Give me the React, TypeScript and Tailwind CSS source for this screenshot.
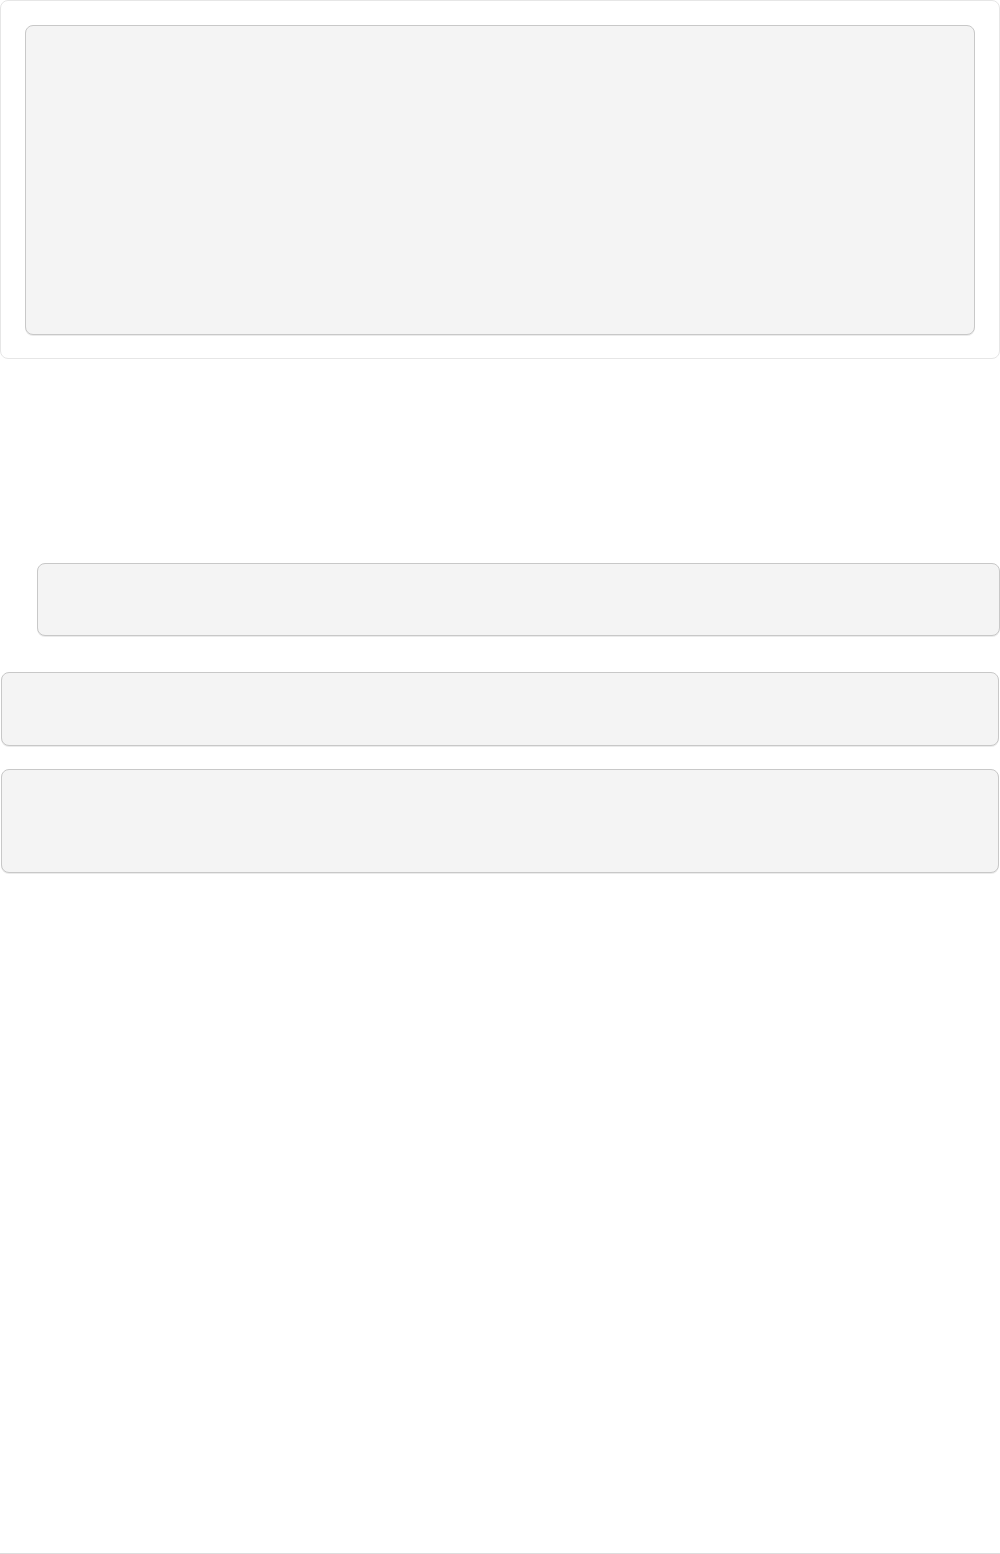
export default function App() {
  return (
    <div className="w-[1000px] h-[1554px] bg-white flex flex-col">
      <div className="border border-[#e6e6e6] rounded-lg p-6 h-[359px]">
        <div className="h-[310px] bg-[#f4f4f4] border border-[#c8c8c8] rounded-lg shadow-[0_1px_0_rgba(0,0,0,0.08)]" />
      </div>
      <div className="pl-[37px] mt-[204px]">
        <div className="h-[73px] bg-[#f4f4f4] border border-[#c8c8c8] rounded-lg shadow-[0_1px_0_rgba(0,0,0,0.08)]" />
      </div>
      <div className="mx-px mt-[36px] h-[74px] bg-[#f4f4f4] border border-[#c8c8c8] rounded-lg shadow-[0_1px_0_rgba(0,0,0,0.08)]" />
      <div className="mx-px mt-[23px] h-[104px] bg-[#f4f4f4] border border-[#c8c8c8] rounded-lg shadow-[0_1px_0_rgba(0,0,0,0.08)]" />
      <div className="flex-1" />
      <div className="h-px bg-[#dddddd]" />
    </div>
  );
}
